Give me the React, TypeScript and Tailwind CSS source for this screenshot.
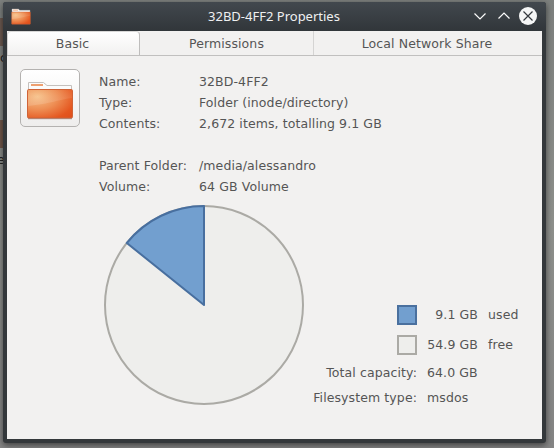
import React from "react";

function Folder({ className }: { className: string }) {
  return (
    <svg className={className} viewBox="0 0 48 40" preserveAspectRatio="none">
      <defs>
        <radialGradient id="folder" cx="0.22" cy="0.25" r="1">
          <stop offset="0" stopColor="#f6c189" />
          <stop offset="0.45" stopColor="#ee8e54" />
          <stop offset="0.85" stopColor="#e4561f" />
          <stop offset="1" stopColor="#e0501c" />
        </radialGradient>
        <linearGradient id="gloss" x1="0" y1="0" x2="0" y2="1">
          <stop offset="0" stopColor="#fff" stopOpacity="0.02" />
          <stop offset="1" stopColor="#fff" stopOpacity="0.15" />
        </linearGradient>
      </defs>
      <path d="M2.5 10V2.5H17.5L21 5.5H45.5V10Z" fill="#fbfbfb" stroke="#c4c0bd" />
      <path d="M5 5H17" stroke="#eea070" strokeWidth="2" />
      <rect x="1.5" y="9.5" width="45" height="28.5" rx="1.2" fill="url(#folder)" stroke="#cf6337" />
      <path d="M2 10H46V18C34 19 24 24 2 26Z" fill="url(#gloss)" />
      <path d="M2 38.7H46" stroke="#8b5744" strokeOpacity="0.6" />
    </svg>
  );
}

const details = [
  ["Name:", "32BD-4FF2"],
  ["Type:", "Folder (inode/directory)"],
  ["Contents:", "2,672 items, totalling 9.1 GB"],
  ["", ""],
  ["Parent Folder:", "/media/alessandro"],
  ["Volume:", "64 GB Volume"],
];

export default function App() {
  return (
    <div className="relative h-[448px] w-[554px] overflow-hidden bg-linear-to-b from-[#7d807e] via-[#8e908c] to-[#858585] pt-0.5 pl-[3px] font-['DejaVu_Sans',sans-serif] text-[12.5px] tracking-[0.1px] text-[#555555]">
      <div className="absolute top-[18px] left-0 h-7 w-[3px] bg-[#6b5950]" />
      <div className="absolute top-[120px] left-0 h-7 w-[3px] bg-[#70574a]" />
      <div className="absolute top-[51px] left-0 leading-[14px] text-[#222]">c</div>
      <div className="absolute top-[153px] -left-[3px] leading-[14px] text-[#222]">e</div>
      <div className="relative flex h-[441px] w-[543px] flex-col rounded-[3px] bg-[#34383b] px-1 pb-1 shadow-[0_2px_6px_rgba(0,0,0,0.55)]">
        <header className="-mx-1 flex h-[29px] shrink-0 items-center rounded-t-[3px] bg-linear-to-b from-[#42484e] to-[#31363a] pr-[9px] pl-[8px]">
          <Folder className="h-[17px] w-5" />
          <h1 className="flex-1 pb-0.5 pl-[47px] text-center font-['Noto_Sans',sans-serif] text-[13px] leading-[18px] tracking-normal text-[#eff0f1]">
            32BD-4FF2 Properties
          </h1>
          <svg className="mt-[-2px] h-[18px] w-[67px]" viewBox="0 0 67 18" fill="none" stroke="#fcfcfc" strokeWidth="1.2">
            <path d="M4.5 6.5L10 12L15.5 6.5M28.5 11.5L34 6L39.5 11.5" />
            <circle cx="58" cy="9" r="9" fill="#f5f6f6" stroke="none" />
            <path d="M53.5 4.5L62.5 13.5M62.5 4.5L53.5 13.5" stroke="#34393e" />
          </svg>
        </header>
        <main className="flex flex-1 flex-col bg-[#f2f1f0]">
          <nav className="flex h-[25px] shrink-0 items-stretch border-b border-[#c1c0bf] text-center leading-[26px]">
            <div className="w-[133px] rounded-t-[4px] border-x border-t border-r-[#bebdbc] border-l-[#d4d3d2] border-t-[#d8d8d7] bg-linear-to-b from-white to-[#f2f1f0] pr-0.5 leading-[23px]">Basic</div>
            <div className="w-[174px] border-r border-[#d5d4d3]">Permissions</div>
            <div className="flex-1 pr-0.5">Local Network Share</div>
          </nav>
          <section className="flex h-[141px] shrink-0 pt-[13px] pl-[13px]">
            <div className="flex h-[58px] w-[60px] items-center justify-center rounded-[5px] border border-[#b4b2b0] bg-linear-to-b from-white to-[#eeedec] pt-1">
              <Folder className="h-10 w-12" />
            </div>
            <dl className="ml-[19px] pt-[3px]">
              {details.map(([label, value], i) => (
                <div key={i} className="flex h-[21px] items-center">
                  <dt className="w-[100px]">{label}</dt>
                  <dd>{value}</dd>
                </div>
              ))}
            </dl>
          </section>
          <section className="flex flex-1">
            <svg className="mt-[7px] ml-[95px] h-[204px] w-[204px] shrink-0" viewBox="102 204 204 204" strokeWidth="2">
              <circle cx="204" cy="305" r="99" fill="#eeeeec" stroke="#abaaa5" />
              <path d="M204 305V206A99 99 0 0 0 126.8 243Z" fill="#729fcf" stroke="#486f9f" strokeLinejoin="round" />
            </svg>
            <div className="mt-[103px] ml-[1px] flex flex-1 flex-col">
              <div className="flex h-[30px] items-center pl-[90px]">
                <span className="size-5 border-2 border-[#4a709e] bg-[#729fcf]" />
                <span className="w-[61px] text-right">9.1 GB</span>
                <span className="ml-2.5">used</span>
              </div>
              <div className="flex h-[30px] items-center pl-[90px]">
                <span className="size-5 border-2 border-[#abaaa5] bg-[#eeeeec]" />
                <span className="w-[61px] text-right">54.9 GB</span>
                <span className="ml-2.5">free</span>
              </div>
              <div className="mt-px flex h-[25px] items-center">
                <span className="w-[110px] text-right whitespace-nowrap">Total capacity:</span>
                <span className="ml-2.5">64.0 GB</span>
              </div>
              <div className="flex h-[25px] items-center">
                <span className="w-[110px] text-right whitespace-nowrap">Filesystem type:</span>
                <span className="ml-2.5">msdos</span>
              </div>
            </div>
          </section>
        </main>
      </div>
    </div>
  );
}
